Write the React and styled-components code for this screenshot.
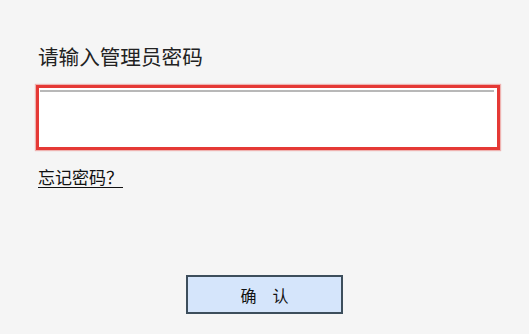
import React from "react";
import styled, { createGlobalStyle } from "styled-components";

const Global = createGlobalStyle`
  html, body {
    margin: 0;
    padding: 0;
    background: #f5f5f5;
  }
  body {
    font-family: "Noto Sans CJK SC", "DejaVu Sans", sans-serif;
    color: #222;
  }
`;

const Page = styled.div`
  width: 529px;
  height: 334px;
  box-sizing: border-box;
  padding: 41px 29px 0 36px;
  display: flex;
  flex-direction: column;
`;

const Title = styled.h1`
  margin: 0 0 0 2px;
  font-size: 20.6px;
  line-height: 30px;
  font-weight: 400;
  color: #222;
`;

const InputFrame = styled.div`
  margin-top: 14px;
  height: 65px;
  box-sizing: border-box;
  border: 3px solid #e53935;
  box-shadow: 0 0 1px 1px rgba(229, 57, 53, 0.35);
  padding: 2px 3px 0 1px;
  background: #fff;
  display: flex;
`;

const PasswordInput = styled.input`
  flex: 1;
  border: none;
  border-top: 2px solid #b8b8b8;
  outline: none;
  background: #fff;
  font-size: 20px;
  padding: 0 6px;
`;

const ForgotLink = styled.a`
  margin: 15px 0 0 2px;
  align-self: flex-start;
  font-size: 17px;
  line-height: 23px;
  color: #111;
  text-decoration: underline;
  text-underline-offset: 3px;
  cursor: pointer;
`;

const Footer = styled.div`
  margin-top: 87px;
  display: flex;
  justify-content: center;
  padding-right: 7px;
`;

const ConfirmButton = styled.button`
  width: 157px;
  height: 39px;
  border: 2px solid #3d4e5c;
  background: #d5e5fb;
  font-family: "Noto Sans CJK SC", sans-serif;
  font-size: 16px;
  color: #111;
  cursor: pointer;
  padding: 0;
`;

export default function App() {
  return (
    <>
      <Global />
      <Page>
        <Title>请输入管理员密码</Title>
        <InputFrame>
          <PasswordInput type="password" />
        </InputFrame>
        <ForgotLink>忘记密码？</ForgotLink>
        <Footer>
          <ConfirmButton>确　认</ConfirmButton>
        </Footer>
      </Page>
    </>
  );
}
